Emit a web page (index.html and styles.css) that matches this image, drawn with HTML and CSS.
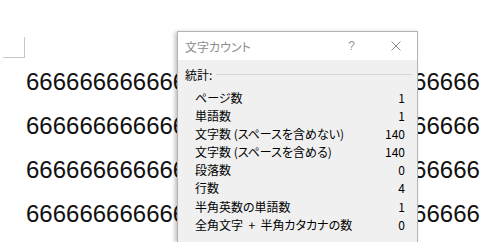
FILE: index.html
```html
<!DOCTYPE html>
<html lang="ja">
<head>
    <meta charset="UTF-8">
    <title>文字カウント</title>
    <link rel="stylesheet" href="styles.css">
</head>
<body>
    <div class="page">
        <div class="crop-mark"></div>
        <div class="doc-text">
            <p class="doc-line">66666666666666666666666666666666666</p>
            <p class="doc-line">66666666666666666666666666666666666</p>
            <p class="doc-line">66666666666666666666666666666666666</p>
            <p class="doc-line">66666666666666666666666666666666666</p>
        </div>
    </div>

    <div class="dialog">
        <div class="dialog-title">
            <span class="title-text">文字カウント</span>
            <span class="title-help">?</span>
            <span class="title-close">
                <svg width="10" height="10" viewBox="0 0 10 10">
                    <path d="M0.5 0.5 L9.5 9.5 M9.5 0.5 L0.5 9.5" stroke="#8a8a8a" stroke-width="1" fill="none"/>
                </svg>
            </span>
        </div>
        <div class="dialog-body">
            <div class="group-head">
                <span>統計:</span>
                <span class="group-rule"></span>
            </div>
            <div class="stats">
                <div class="stat-row"><span>ページ数</span><span>1</span></div>
                <div class="stat-row"><span>単語数</span><span>1</span></div>
                <div class="stat-row"><span>文字数 (スペースを含めない)</span><span>140</span></div>
                <div class="stat-row"><span>文字数 (スペースを含める)</span><span>140</span></div>
                <div class="stat-row"><span>段落数</span><span>0</span></div>
                <div class="stat-row"><span>行数</span><span>4</span></div>
                <div class="stat-row"><span>半角英数の単語数</span><span>1</span></div>
                <div class="stat-row"><span>全角文字 &nbsp;+&nbsp; 半角カタカナの数</span><span>0</span></div>
            </div>
        </div>
    </div>
</body>
</html>
```

FILE: styles.css
```css
body {
    margin: 0;
    padding: 0;
    background: #ffffff;
    width: 480px;
    height: 242px;
    overflow: hidden;
    font-family: "Liberation Sans", Arial, sans-serif;
}

.page {
    padding: 37px 0 0 3px;
}

/* corner marker of the text area */
.crop-mark {
    width: 22px;
    height: 21px;
    border-right: 1px solid #c6c6c6;
    border-bottom: 1px solid #c6c6c6;
    box-sizing: border-box;
}

.doc-text {
    margin-top: 2px;
    padding-left: 23px;
}

.doc-line {
    margin: 0;
    font-size: 24px;
    line-height: 44px;
    color: #111;
    white-space: nowrap;
}

/* Word count dialog */
.dialog {
    position: absolute;
    left: 177px;
    top: 31px;
    width: 241px;
    height: 211px;
    box-sizing: border-box;
    border: 1px solid #b4b4b4;
    border-bottom: none;
    background: #f0f0f0;
    box-shadow: -2px 1px 4px rgba(0, 0, 0, 0.25);
    font-family: "Noto Sans CJK JP", sans-serif;
    font-feature-settings: "palt";
    font-size: 12px;
    color: #000;
}

.dialog-title {
    display: flex;
    align-items: center;
    height: 28px;
    background: #ffffff;
    padding: 0 16px 0 7px;
}

.title-text {
    flex: 1;
    color: #8c8c8c;
}

.title-help {
    color: #9a9a9a;
    font-family: "Liberation Sans", sans-serif;
    font-size: 12px;
    margin-right: 36px;
}

.title-close {
    display: flex;
}

.dialog-body {
    padding: 6px 5px 0 7px;
}

.group-head {
    display: flex;
    align-items: center;
    gap: 4px;
    height: 16px;
}

.group-rule {
    flex: 1;
    border-top: 1px solid #d6d6d6;
    margin-top: 1px;
}

.stats {
    margin-top: 7px;
    padding: 0 7px 0 10px;
}

.stat-row {
    display: flex;
    justify-content: space-between;
    height: 18.1px;
    line-height: 18px;
}
```
